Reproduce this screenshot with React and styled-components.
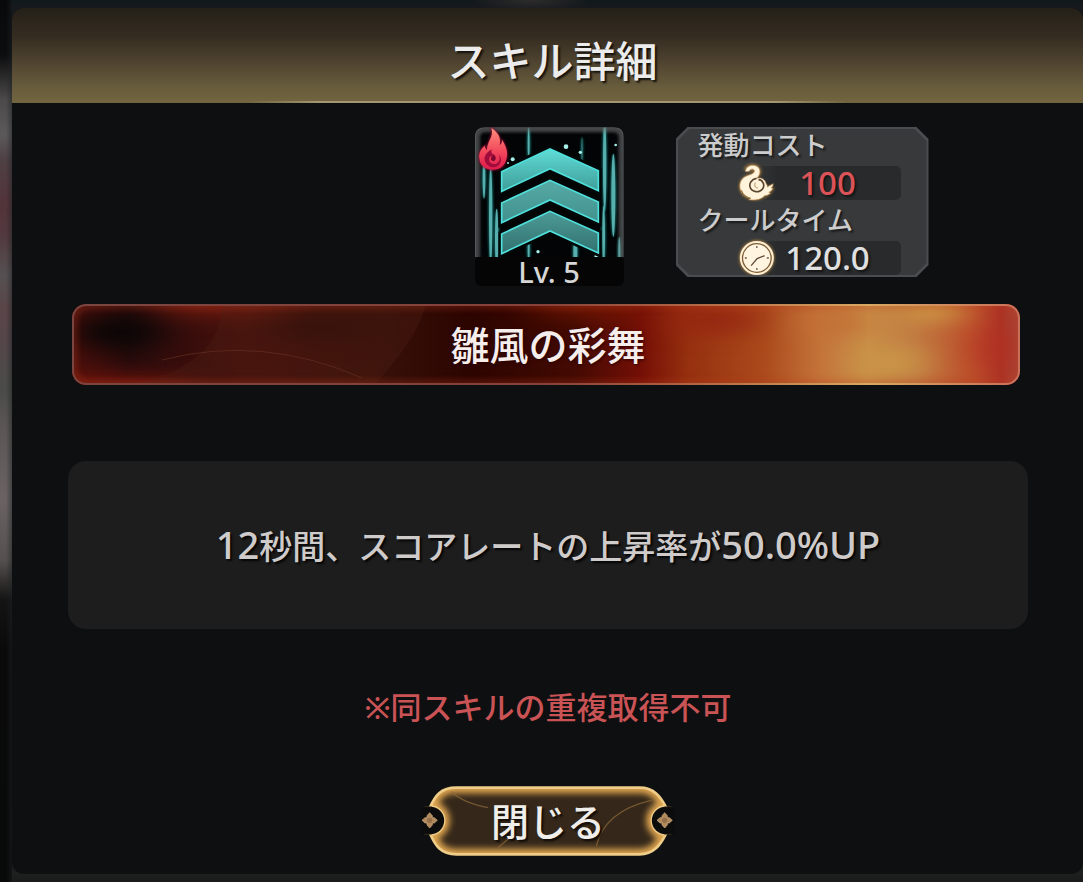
import React from "react";
import styled, { createGlobalStyle } from "styled-components";

const GlobalStyle = createGlobalStyle`
  *, *::before, *::after { box-sizing: border-box; }
  body {
    margin: 0;
    background: #0b0d0e;
    font-family: "Noto Sans", "Open Sans", "Noto Sans CJK JP", sans-serif;
    font-weight: 500;
    color: #dcdcdc;
  }
`;

const Backdrop = styled.div`
  display: flex;
  min-height: 100vh;
  padding: 8px 0 9px 12px;
  background:
    radial-gradient(ellipse 60px 12px at 49% 0, #2e2c2b, transparent),
    linear-gradient(90deg, transparent 0, transparent 6px, rgba(30, 34, 35, 0.5) 12px, transparent 13px),
    linear-gradient(180deg, #07090a 0, #0c0d0e 55px, #4c4a4b 100px, #5c595a 135px, #4e4044 160px,
      #53333a 205px, #52393e 235px, #555052 275px, #5a4548 310px, #54464a 345px, #4a4c48 390px,
      #5c5656 430px, #6a6263 500px, #55504f 560px, #141414 600px, #0a0a0a 650px, #080909 100%)
      0 0 / 12px 100% no-repeat,
    linear-gradient(180deg, #10181a 0, #17191e 8px, #141516 20px, #1b1d1d 98%, #1e201f 99%, #191a19 100%);
`;

const Dialog = styled.main`
  display: flex;
  flex: 1;
  flex-direction: column;
  min-width: 0;
  border-radius: 12px;
  overflow: hidden;
  background: #0d0f10;
`;

const Header = styled.header`
  position: relative;
  display: flex;
  align-items: center;
  justify-content: center;
  height: 95px;
  padding: 10px 0 0 10px;
  background: linear-gradient(180deg, #242018 0, #352c21 28px, #574b34 62px, #665b3b 78px, #72643f 94px);

  &::after {
    content: "";
    position: absolute;
    right: 22%;
    bottom: 0;
    left: 22%;
    height: 2px;
    background: linear-gradient(90deg, transparent, #a59572 12%, #a59572 88%, transparent);
  }
`;

const Title = styled.h1`
  margin: 0;
  font-size: 42px;
  font-weight: 500;
  line-height: 60px;
  color: #ececec;
  text-shadow: 2px 2px 2px #14110c;
`;

const Body = styled.div`
  display: flex;
  flex: 1;
  flex-direction: column;
  padding: 24px 55px 17px 56px;
`;

const Summary = styled.section`
  display: grid;
  grid-template-columns: 1fr auto 1fr;
  column-gap: 52px;
  align-items: start;
  padding-left: 2px;
`;

const Emblem = styled.div`
  grid-column: 2;
  width: 149px;

  svg { display: block; }
`;

const Level = styled.p`
  margin: 0;
  border-radius: 4px 4px 6px 6px;
  background: #050505;
  font-size: 29px;
  line-height: 29px;
  color: #d6d6d6;
  text-align: center;
`;

const StatFrame = styled.dl`
  justify-self: start;
  width: 253px;
  margin: 0;
  padding: 2px;
  background: #4a4d4f;
  clip-path: polygon(12px 0, calc(100% - 12px) 0, 100% 12px, 100% calc(100% - 12px),
    calc(100% - 12px) 100%, 12px 100%, 0 calc(100% - 12px), 0 12px);
`;

const StatList = styled.div`
  display: grid;
  gap: 4px;
  padding: 0 26px 0 20px;
  background: #37393a;
  clip-path: polygon(12px 0, calc(100% - 12px) 0, 100% 12px, 100% calc(100% - 12px),
    calc(100% - 12px) 100%, 12px 100%, 0 calc(100% - 12px), 0 12px);
`;

const StatLabel = styled.dt`
  font-size: 26px;
  line-height: 33px;
  color: #cccccc;
  text-shadow: 2px 2px 2px #191a1b;
`;

const StatValue = styled.dd`
  display: flex;
  align-items: center;
  height: 34px;
  margin: 0 0 0 40px;
  border-radius: 5px;
  background: linear-gradient(90deg, transparent 8px, #282a2b 40px);

  svg { flex: none; overflow: visible; }

  span {
    flex: 1;
    padding-right: 20px;
    font-size: 33px;
    line-height: 34px;
    text-align: center;
    color: ${({ $alert }) => ($alert ? "#db5357" : "#e0e0e0")};
    text-shadow: 2px 2px 2px #151617;
  }
`;

const Banner = styled.section`
  position: relative;
  display: flex;
  align-items: center;
  justify-content: center;
  height: 81px;
  margin: 18px 8px 0 4px;
  border-radius: 14px;
  overflow: hidden;
  background: #3a0d08;

  svg { position: absolute; inset: 0; width: 100%; height: 100%; }
`;

const SkillName = styled.h2`
  position: relative;
  margin: 0;
  padding-left: 4px;
  font-size: 39px;
  font-weight: 500;
  line-height: 56px;
  color: #f6eeec;
  text-shadow: 1px 1px 3px #2a0000;
`;

const Description = styled.p`
  display: flex;
  align-items: center;
  justify-content: center;
  min-height: 168px;
  margin: 76px 0 0;
  border-radius: 18px;
  background: #1d1d1d;
  font-size: 33px;
  line-height: 46px;
  color: #cfcbca;
  text-shadow: 2px 2px 2px #060606;
`;

const Latin = styled.span`
  font-size: 38px;
`;

const Notice = styled.p`
  margin: 55px 0 0;
  font-size: 31px;
  line-height: 46px;
  text-align: center;
  color: #c95355;
`;

const CloseButton = styled.button`
  position: relative;
  align-self: center;
  width: 254px;
  height: 72px;
  margin-top: 55px;
  padding: 0;
  border: 0;
  background: none;
  font-family: inherit;
  font-size: 38px;
  font-weight: 500;
  line-height: 56px;
  color: #f0eeea;
  text-shadow: 2px 2px 2px #100c06;
  cursor: pointer;

  svg { position: absolute; inset: 0; }
  span { position: relative; }
`;

const chevrons = [
  { y: 98, from: "#5fdcd6", to: "#3f9c98" },
  { y: 192, from: "#56aaa6", to: "#41918d" },
  { y: 285, from: "#4c9b98", to: "#32716f" },
];

const streaks = [
  [72, 190, 4, 60], [92, 300, 5, 150], [110, 370, 5, 90], [206, 85, 3, 50],
  [366, 105, 1, 40], [434, 150, 5, 140], [431, 360, 4, 90], [460, 240, 6, 125],
  [346, 410, 6, 60], [206, 400, 3, 40], [478, 410, 3, 45],
];

const flame =
  "M94 38C116 52 124 69 119 90C125 85 127 79 126 73C139 94 145 111 139 131C134 153 119 163 99 163C76 163 60 149 58 130C55 111 65 99 74 91C75 97 77 101 81 104C80 78 103 65 94 38Z";

function EmblemArt() {
  return (
    <svg width="149" height="130" viewBox="45 35 447 390" role="img" aria-label="火属性スキル">
      <defs>
        <clipPath id="tile"><path d="M45 425V65Q45 36 75 36H462Q491 36 491 65V425Z" /></clipPath>
        <filter id="soft" x="-200%" width="500%"><feGaussianBlur stdDeviation="3" /></filter>
        <filter id="edge" x="-20%" y="-20%" width="140%" height="140%"><feGaussianBlur stdDeviation="5" /></filter>
        <linearGradient id="flame" x1="0" y1="0" x2="0" y2="1">
          <stop offset="0" stopColor="#ff8c7c" />
          <stop offset="0.55" stopColor="#f2495c" />
          <stop offset="1" stopColor="#e01a4c" />
        </linearGradient>
        {chevrons.map((c) => (
          <linearGradient key={c.y} id={`chevron${c.y}`} x1="0" y1="0" x2="0" y2="1">
            <stop offset="0" stopColor={c.from} />
            <stop offset="1" stopColor={c.to} />
          </linearGradient>
        ))}
      </defs>
      <g clipPath="url(#tile)">
        <rect x="45" y="35" width="447" height="400" fill="#020405" />
        {streaks.map(([x, y, rx, ry], i) => (
          <g key={i}>
            <ellipse cx={x} cy={y} rx={rx + 3} ry={ry} fill="#1f8a88" filter="url(#soft)" opacity="0.7" />
            <ellipse cx={x} cy={y} rx={rx} ry={ry} fill="#57b0ae" />
          </g>
        ))}
        {[[158, 132, 6], [318, 94, 7], [361, 111, 5], [467, 89, 4], [234, 409, 5], [410, 424, 7], [144, 143, 3]].map(
          ([x, y, r]) => <circle key={x} cx={x} cy={y} r={r} fill="#a8f0ec" />
        )}
        {chevrons.map(({ y }) => (
          <path
            key={y}
            d={`M124 ${y + 70}L270 ${y}L416 ${y + 67}V${y + 130}L270 ${y + 63}L124 ${y + 132}Z`}
            fill="#020808"
            stroke="#020808"
            strokeWidth="18"
          />
        ))}
        {chevrons.map(({ y }) => (
          <path
            key={y}
            d={`M125 ${y + 71}L270 ${y + 3}L415 ${y + 68}V${y + 128}L270 ${y + 62}L125 ${y + 130}Z`}
            fill={`url(#chevron${y})`}
            stroke="#4fe0dc"
            strokeWidth="5"
          />
        ))}
        <path d="M50 440V66Q50 41 76 41H460Q486 41 486 66V440" fill="none" stroke="#777b7c" strokeWidth="20" opacity="0.55" filter="url(#edge)" />
        <path d="M46 425V65Q46 37 75 37H462Q490 37 490 65V425" fill="none" stroke="#55585a" strokeWidth="4" />
      </g>
      <path d={flame} fill="#b00d38" stroke="#8a0c30" strokeWidth="6" filter="url(#soft)" opacity="0.8" />
      <path d={flame} fill="url(#flame)" />
      <path d="M82 148C66 135 74 112 96 102C90 112 99 116 103 125C99 132 92 128 92 121C82 132 90 146 102 146C116 146 123 132 117 118C130 132 121 154 102 156C93 156 86 153 82 148Z" fill="#a00c3c" />
      <path d="M99 115C109 122 110 133 102 137C95 138 91 132 93 127C96 130 101 127 99 115Z" fill="#7c0832" />
    </svg>
  );
}

function CostIcon() {
  return (
    <svg width="37" height="36" viewBox="218 146 110 108" aria-hidden="true">
      <defs><filter id="glow" x="-30%" y="-30%" width="160%" height="160%"><feGaussianBlur stdDeviation="5" /></filter></defs>
      <path d="M245 163C247 150 280 148 276 169C273 186 234 180 232 207C231 232 258 246 282 238C300 232 312 222 316 210" fill="none" stroke="#d39a49" strokeWidth="22" opacity="0.6" filter="url(#glow)" />
      <path
        d="M240 166C240 154 250 147 262 147C276 147 285 157 283 169C282 177 278 182 273 186C288 182 299 189 302 202C305 206 306 208 305 212L323 202C323 207 321 211 317 215L322 216C320 222 315 226 310 228L315 231C309 236 303 238 297 238C288 250 270 253 250 250L255 246C230 240 222 223 223 206C225 187 238 180 251 176C263 172 269 167 266 162C263 156 254 158 251 165Z"
        fill="#fff3dc"
        stroke="#b98a4c"
        strokeWidth="2"
      />
      <path d="M273 186C258 189 250 201 254 213C259 228 281 231 291 218C299 207 293 191 279 190" fill="none" stroke="#5c4630" strokeWidth="5" />
      <path d="M270 199C265 207 269 215 277 215" fill="none" stroke="#b08a58" strokeWidth="3" />
      <path d="M227 222C232 236 242 244 255 246" fill="none" stroke="#94713f" strokeWidth="4" />
    </svg>
  );
}

function ClockIcon() {
  return (
    <svg width="37" height="36" viewBox="218 378 110 108" aria-hidden="true">
      <circle cx="274" cy="432" r="53" fill="#d39a49" opacity="0.7" filter="url(#glow)" />
      <circle cx="274" cy="432" r="51" fill="#fff0d2" />
      <circle cx="274" cy="432" r="43" fill="#fff4df" stroke="#7c5b36" strokeWidth="4" />
      <path d="M257 455L275 434L297 425" fill="none" stroke="#5d4935" strokeWidth="4" />
      <path d="M274 396V402M274 462V468M238 432H244M304 432H310" stroke="#74583c" strokeWidth="4" />
    </svg>
  );
}

function BannerArt() {
  return (
    <svg viewBox="0 0 948 81" preserveAspectRatio="none" aria-hidden="true">
      <defs>
        <linearGradient id="lava">
          <stop offset="0" stopColor="#4a0f0b" />
          <stop offset="0.06" stopColor="#280b0b" />
          <stop offset="0.18" stopColor="#46100c" />
          <stop offset="0.33" stopColor="#371009" />
          <stop offset="0.42" stopColor="#2c0400" />
          <stop offset="0.53" stopColor="#430a02" />
          <stop offset="0.6" stopColor="#740f06" />
          <stop offset="0.65" stopColor="#96300f" />
          <stop offset="0.73" stopColor="#ab4a1c" />
          <stop offset="0.79" stopColor="#c4743a" />
          <stop offset="0.84" stopColor="#c98f48" />
          <stop offset="0.89" stopColor="#c07840" />
          <stop offset="0.95" stopColor="#bc4f2b" />
          <stop offset="0.98" stopColor="#ac3324" />
          <stop offset="1" stopColor="#a8483a" />
        </linearGradient>
        <linearGradient id="rim">
          <stop offset="0" stopColor="#7a4540" />
          <stop offset="0.5" stopColor="#87413a" />
          <stop offset="0.65" stopColor="#b06444" />
          <stop offset="0.84" stopColor="#d9a862" />
          <stop offset="1" stopColor="#c9705a" />
        </linearGradient>
        <filter id="haze" filterUnits="userSpaceOnUse" x="-60" y="-60" width="1068" height="201" colorInterpolationFilters="sRGB">
          <feGaussianBlur stdDeviation="18 10" />
        </filter>
        <filter id="thin" x="-20%" y="-20%" width="140%" height="140%"><feGaussianBlur stdDeviation="3" /></filter>
      </defs>
      <rect width="948" height="81" fill="url(#lava)" />
      <g filter="url(#haze)">
        <ellipse cx="45" cy="28" rx="46" ry="16" fill="#090606" />
        <ellipse cx="40" cy="84" rx="90" ry="11" fill="#7c160c" />
        <ellipse cx="150" cy="0" rx="70" ry="10" fill="#7c1e10" />
        <ellipse cx="250" cy="24" rx="50" ry="12" fill="#2a0c07" />
        <ellipse cx="520" cy="0" rx="60" ry="10" fill="#7a1a04" />
        <ellipse cx="640" cy="16" rx="50" ry="12" fill="#942511" />
        <ellipse cx="860" cy="4" rx="30" ry="14" fill="#cf9a45" />
        <ellipse cx="820" cy="58" rx="36" ry="16" fill="#c99548" />
        <ellipse cx="765" cy="18" rx="34" ry="12" fill="#c26f34" />
        <ellipse cx="922" cy="44" rx="12" ry="22" fill="#b42e22" />
      </g>
      <path d="M150 0H354Q345 36 302 81H60Q150 60 150 0Z" fill="#4c2015" opacity="0.35" />
      <path d="M90 56Q190 30 290 74" fill="none" stroke="#6a3326" strokeWidth="1" opacity="0.6" />
      <rect x="2" y="2" width="944" height="77" rx="13" fill="none" stroke="#bd3c22" strokeWidth="5" opacity="0.4" filter="url(#thin)" />
      <rect x="1" y="1" width="946" height="79" rx="13" fill="none" stroke="url(#rim)" strokeWidth="2" />
    </svg>
  );
}

const plaque =
  "M140 40H690C732 40 752 66 768 97A41 41 0 0 0 768 180C752 212 732 240 690 240H140C92 240 76 212 62 180A41 41 0 0 0 62 97C76 66 92 40 140 40Z";

function Rosette({ x }) {
  return (
    <g fill="#b08a5c" stroke="#d1ad7b" strokeWidth="2">
      <path d={`M${x} 115L${x + 8} 124V130H${x + 14}L${x + 23} 138L${x + 14} 146H${x + 8}V152L${x} 161L${x - 8} 152V146H${x - 14}L${x - 23} 138L${x - 14} 130H${x - 8}V124Z`} strokeLinejoin="round" />
      <circle cx={x} cy="138" r="8" stroke="none" fill="#94704a" />
    </g>
  );
}

function ButtonArt() {
  return (
    <svg width="254" height="72" viewBox="34 32 762 216" aria-hidden="true">
      <defs>
        <clipPath id="plaque"><path d={plaque} /></clipPath>
        <filter id="ember" x="-10%" y="-20%" width="120%" height="140%" colorInterpolationFilters="sRGB">
          <feGaussianBlur stdDeviation="9" />
        </filter>
      </defs>
      <path d={plaque} fill="#35281a" />
      <g clipPath="url(#plaque)">
        <path d={plaque} fill="none" stroke="#e0a650" strokeWidth="34" filter="url(#ember)" />
        <path d="M125 52Q160 85 235 100M560 215Q585 110 725 78M265 220L300 190" fill="none" stroke="#8e6a3a" strokeWidth="4" opacity="0.7" />
      </g>
      <path d={plaque} fill="none" stroke="#efcd88" strokeWidth="8" />
      <path d="M36 97H62A41 41 0 0 1 62 180H36Z" fill="#0c0c0c" />
      <path d="M796 97H768A41 41 0 0 0 768 180H796Z" fill="#0c0c0c" />
      <path d="M44 97H66M44 180H66M764 97H786M764 180H786" stroke="#4a391e" strokeWidth="2" />
      <Rosette x={60} />
      <Rosette x={765} />
    </svg>
  );
}

export default function App() {
  return (
    <>
      <GlobalStyle />
      <Backdrop>
        <Dialog>
          <Header>
            <Title>スキル詳細</Title>
          </Header>
          <Body>
            <Summary>
              <Emblem>
                <EmblemArt />
                <Level>Lv. 5</Level>
              </Emblem>
              <StatFrame>
                <StatList>
                  <StatLabel>発動コスト</StatLabel>
                  <StatValue $alert>
                    <CostIcon />
                    <span>100</span>
                  </StatValue>
                  <StatLabel>クールタイム</StatLabel>
                  <StatValue>
                    <ClockIcon />
                    <span>120.0</span>
                  </StatValue>
                </StatList>
              </StatFrame>
            </Summary>
            <Banner>
              <BannerArt />
              <SkillName>雛風の彩舞</SkillName>
            </Banner>
            <Description>
              <span>
                <Latin>12</Latin>秒間、スコアレートの上昇率が<Latin>50.0%UP</Latin>
              </span>
            </Description>
            <Notice>※同スキルの重複取得不可</Notice>
            <CloseButton type="button">
              <ButtonArt />
              <span>閉じる</span>
            </CloseButton>
          </Body>
        </Dialog>
      </Backdrop>
    </>
  );
}
